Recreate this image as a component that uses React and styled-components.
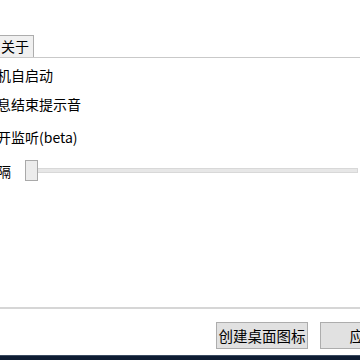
import styled, { createGlobalStyle } from "styled-components";

const GlobalStyle = createGlobalStyle`
  html, body {
    margin: 0;
    padding: 0;
    background: #fff;
  }
  body {
    font-family: "Noto Sans CJK SC", "Noto Sans", sans-serif;
    color: #000;
  }
`;

const Screen = styled.div`
  width: 360px;
  height: 360px;
  overflow: hidden;
  display: flex;
  flex-direction: column;
  background: #fff;
`;

const Window = styled.div`
  flex: 1;
  display: flex;
  flex-direction: column;
  margin-left: -17px;
  width: 377px;
`;

const TabStrip = styled.div`
  display: flex;
  padding-top: 35px;
  padding-left: 7px;
`;

const Tab = styled.div`
  height: 22px;
  width: 44px;
  box-sizing: border-box;
  padding-left: 10px;
  border: 1px solid #adadad;
  border-bottom: none;
  background: #f0f0f0;
  font-size: 14px;
  line-height: 21px;
`;

const Pane = styled.div`
  height: 252px;
  box-sizing: border-box;
  border-top: 1px solid #c9c9c9;
  border-bottom: 2px solid #d6d6d6;
  display: flex;
  flex-direction: column;
`;

const Row = styled.div`
  height: 30px;
  margin-top: ${(p) => p.$gap}px;
  display: flex;
  align-items: center;
  font-size: 14px;
  white-space: nowrap;
`;

const SliderRow = styled(Row)`
  height: 31px;
  gap: 14px;
`;

const Slider = styled.div`
  position: relative;
  flex: 1;
  height: 31px;
  display: flex;
  align-items: center;
  margin-right: 2px;
`;

const Track = styled.div`
  flex: 1;
  height: 5px;
  box-sizing: border-box;
  margin-left: 6px;
  background: #e7e7e7;
  border: 1px solid #d8d8d8;
  border-left: none;
`;

const Thumb = styled.div`
  position: absolute;
  left: 0;
  top: 5px;
  width: 13px;
  height: 21px;
  box-sizing: border-box;
  background: #ececec;
  border: 1px solid #a9a9a9;
`;

const Footer = styled.div`
  display: flex;
  gap: 12px;
  padding-top: 13px;
  padding-left: 233px;
  height: 46px;
  box-sizing: border-box;
`;

const Button = styled.div`
  width: ${(p) => p.$width}px;
  height: 27px;
  flex: none;
  box-sizing: border-box;
  border: 1px solid #adadad;
  background: #e1e1e1;
  font-size: 14.5px;
  line-height: 25px;
  text-align: center;
  white-space: nowrap;
`;

const Taskbar = styled.div`
  height: 4px;
  background: #0e1c33;
  border-top: 1px solid #3a4a60;
`;

export default function App() {
  return (
    <>
      <GlobalStyle />
      <Screen>
        <Window>
          <TabStrip>
            <Tab>关于</Tab>
          </TabStrip>
          <Pane>
            <Row $gap={2}>开机自启动</Row>
            <Row $gap={-1}>消息结束提示音</Row>
            <Row $gap={3}>打开监听(beta)</Row>
            <SliderRow $gap={3}>
              间隔
              <Slider>
                <Track />
                <Thumb />
              </Slider>
            </SliderRow>
          </Pane>
          <Footer>
            <Button $width={92}>创建桌面图标</Button>
            <Button $width={88}>应用</Button>
          </Footer>
        </Window>
        <Taskbar />
      </Screen>
    </>
  );
}
